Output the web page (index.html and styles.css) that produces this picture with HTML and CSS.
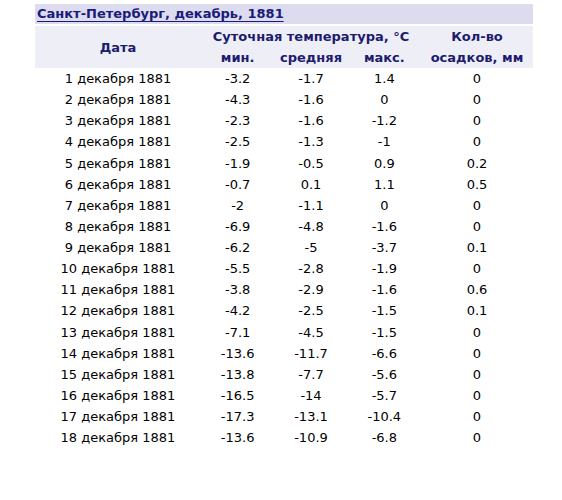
FILE: index.html
```html
<!DOCTYPE html>
<html lang="ru">
<head>
  <meta charset="UTF-8">
  <title>Санкт-Петербург, декабрь, 1881</title>
  <link rel="stylesheet" href="styles.css">
</head>
<body>
  <div class="weather-block">
    <div class="caption"><a href="#">Санкт-Петербург, декабрь, 1881</a></div>
    <table class="climate">
      <thead>
        <tr>
          <th rowspan="2" class="col-date">Дата</th>
          <th colspan="3">Суточная температура, °C</th>
          <th rowspan="2" class="col-rain">Кол-во<br>осадков, мм</th>
        </tr>
        <tr>
          <th class="col-t">мин.</th>
          <th class="col-avg">средняя</th>
          <th class="col-t">макс.</th>
        </tr>
      </thead>
      <tbody>
        <tr><td>1 декабря 1881</td><td>-3.2</td><td>-1.7</td><td>1.4</td><td>0</td></tr>
        <tr><td>2 декабря 1881</td><td>-4.3</td><td>-1.6</td><td>0</td><td>0</td></tr>
        <tr><td>3 декабря 1881</td><td>-2.3</td><td>-1.6</td><td>-1.2</td><td>0</td></tr>
        <tr><td>4 декабря 1881</td><td>-2.5</td><td>-1.3</td><td>-1</td><td>0</td></tr>
        <tr><td>5 декабря 1881</td><td>-1.9</td><td>-0.5</td><td>0.9</td><td>0.2</td></tr>
        <tr><td>6 декабря 1881</td><td>-0.7</td><td>0.1</td><td>1.1</td><td>0.5</td></tr>
        <tr><td>7 декабря 1881</td><td>-2</td><td>-1.1</td><td>0</td><td>0</td></tr>
        <tr><td>8 декабря 1881</td><td>-6.9</td><td>-4.8</td><td>-1.6</td><td>0</td></tr>
        <tr><td>9 декабря 1881</td><td>-6.2</td><td>-5</td><td>-3.7</td><td>0.1</td></tr>
        <tr><td>10 декабря 1881</td><td>-5.5</td><td>-2.8</td><td>-1.9</td><td>0</td></tr>
        <tr><td>11 декабря 1881</td><td>-3.8</td><td>-2.9</td><td>-1.6</td><td>0.6</td></tr>
        <tr><td>12 декабря 1881</td><td>-4.2</td><td>-2.5</td><td>-1.5</td><td>0.1</td></tr>
        <tr><td>13 декабря 1881</td><td>-7.1</td><td>-4.5</td><td>-1.5</td><td>0</td></tr>
        <tr><td>14 декабря 1881</td><td>-13.6</td><td>-11.7</td><td>-6.6</td><td>0</td></tr>
        <tr><td>15 декабря 1881</td><td>-13.8</td><td>-7.7</td><td>-5.6</td><td>0</td></tr>
        <tr><td>16 декабря 1881</td><td>-16.5</td><td>-14</td><td>-5.7</td><td>0</td></tr>
        <tr><td>17 декабря 1881</td><td>-17.3</td><td>-13.1</td><td>-10.4</td><td>0</td></tr>
        <tr><td>18 декабря 1881</td><td>-13.6</td><td>-10.9</td><td>-6.8</td><td>0</td></tr>
      </tbody>
    </table>
  </div>
</body>
</html>
```

FILE: styles.css
```css
body {
  margin: 0;
  padding: 4px 0 0 35px;
  font-family: "DejaVu Sans", Verdana, sans-serif;
  font-size: 13px;
  background-color: #ffffff;
  color: #000000;
}

.weather-block {
  width: 498px;
}

.caption {
  background-color: #dcdcee;
  height: 20px;
  line-height: 19px;
  padding-left: 2px;
  font-weight: bold;
}

.caption a {
  color: #1a1a78;
  text-decoration: underline;
  text-underline-offset: 3px;
}

/* Table with weather data */
.climate {
  width: 498px;
  margin-top: 2px;
  border-collapse: collapse;
  table-layout: fixed;
}

.climate th,
.climate td {
  padding: 0;
  text-align: center;
  height: 21px;
  line-height: 21px;
  white-space: nowrap;
}

.climate td {
  height: 21.12px;
  line-height: 21.12px;
}

.climate thead {
  background-color: #eeeef7;
}

.climate th {
  color: #1c1c6e;
  font-weight: bold;
}

.col-date {
  width: 166px;
}

.col-t {
  width: 70px;
}

.col-avg {
  width: 80px;
}

.col-rain {
  width: 112px;
}
```
